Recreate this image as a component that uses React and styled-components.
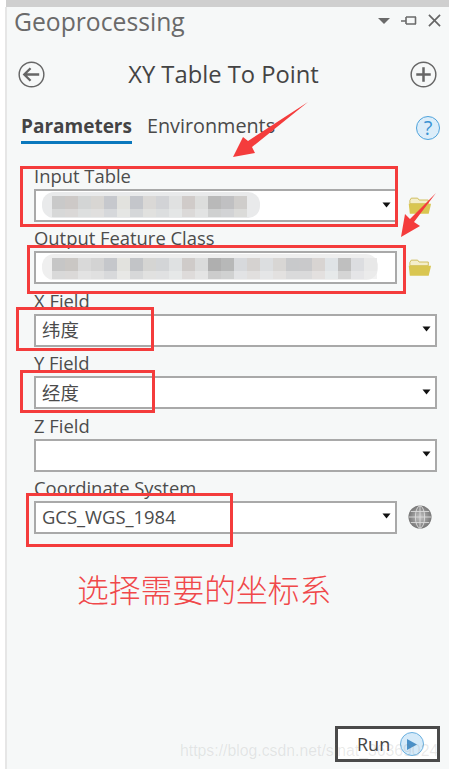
import React from 'react';
import styled, { createGlobalStyle } from 'styled-components';

const FONT = '"Open Sans", "Noto Sans CJK SC", sans-serif';

const BLOCKS_ONE = ['#c9c9c9', '#cdc9c7', '#d3d5d5', '#d8d6d3', '#c6c8cd', '#e2e2de', '#c4c6cb', '#dad8d6', '#d2d3d6', '#e0e1e1', '#d0cbc9', '#dcdddc', '#b9b9b9', '#c0c0c2', '#cfcdcb'];
const BLOCKS_TWO = ['#c6c6c6', '#cac7c4', '#d9d9d9', '#d3d3d3', '#c5c7cb', '#e2e2de', '#c2c4c7', '#d5d5d3', '#d3d5d7', '#dfe1e2', '#cfcbc9', '#dadbdb', '#afafaf', '#b7b8b8', '#d7d9dc', '#d5d2d0', '#dcdee0', '#d8d6d4', '#c8c9cb', '#c9c9cb', '#d8d4d2', '#dfe3e6', '#bfbfbf', '#dcdde0', '#e8e8e8'];

const Smudge = ({ blocks, width, pill }) => (
  <SmudgeSvg width={width} height="29" viewBox={`0 0 ${width} 29`}>
    <rect x="0" y="0" width={width} height="26" rx="12" fill={pill} />
    {blocks.map((c, i) => (
      <g key={i}>
        <rect x={10 + i * 13} y="4" width="13" height="13" fill={c} />
        <rect x={10 + i * 13} y="17" width="13" height="8" fill={c} opacity="0.55" />
      </g>
    ))}
  </SmudgeSvg>
);

const Caret = () => (
  <svg width="9" height="6" viewBox="0 0 9 6"><path d="M0.5 0.5h8L4.5 5.5z" fill="#111" /></svg>
);

const Folder = () => (
  <svg width="24" height="18" viewBox="0 0 26 19">
    <path d="M2 3.5 3.5 1h7L12 3h10v4H2z" fill="#f4eecb" stroke="#cdbb55" strokeWidth="1" />
    <path d="M2 18 .8 7H25l-2.6 11z" fill="#d9c651" />
  </svg>
);

const Globe = () => (
  <svg width="24" height="24" viewBox="0 0 26 26">
    <defs>
      <radialGradient id="globeFill">
        <stop offset="0" stopColor="#c4c4c4" />
        <stop offset="1" stopColor="#777" />
      </radialGradient>
    </defs>
    <circle cx="13" cy="13" r="12.5" fill="url(#globeFill)" />
    <g fill="none" stroke="#dadada" strokeWidth="1">
      <ellipse cx="13" cy="13" rx="5" ry="12" />
      <path d="M13 1v24M1 13h24M3 7h20M3 19h20" />
    </g>
  </svg>
);

const Field = ({ label, value, caret = true, wide, trailing, children }) => (
  <FieldRow>
    <Label>{label}</Label>
    <FieldLine>
      <Box $wide={wide}>
        <Value>{value}</Value>
        {children}
        {caret && <Caret />}
      </Box>
      {trailing && <Trailing>{trailing}</Trailing>}
    </FieldLine>
  </FieldRow>
);

const App = () => (
  <Page>
    <GlobalStyle />
    <TopBar />
    <Panel>
      <PaneHeader>
        <PaneTitle>Geoprocessing</PaneTitle>
        <PaneControls>
          <svg width="12" height="6" viewBox="0 0 12 6"><path d="M0 0h12L6 6z" fill="#6a6a6a" /></svg>
          <svg width="16" height="10" viewBox="0 0 16 10"><path d="M0 5h5M5 1h10M5 8h10M5 1v7M14.5 1v7" stroke="#6a6a6a" strokeWidth="1.6" fill="none" /></svg>
          <svg width="13" height="13" viewBox="0 0 14 14"><path d="M1 1l12 12M13 1L1 13" stroke="#666" strokeWidth="1.8" /></svg>
        </PaneControls>
      </PaneHeader>
      <ToolHeader>
        <svg width="27" height="27" viewBox="0 0 28 28">
          <circle cx="14" cy="14" r="12.8" fill="none" stroke="#666" strokeWidth="1.5" />
          <path d="M22 14H7M13 7.5 6.5 14l6.5 6.5" fill="none" stroke="#666" strokeWidth="2.4" />
        </svg>
        <ToolTitle>XY Table To Point</ToolTitle>
        <svg width="27" height="27" viewBox="0 0 28 28">
          <circle cx="14" cy="14" r="12.8" fill="none" stroke="#666" strokeWidth="1.5" />
          <path d="M14 6.5v15M6.5 14h15" fill="none" stroke="#666" strokeWidth="2.6" />
        </svg>
      </ToolHeader>
      <Tabs>
        <Tab $active>Parameters</Tab>
        <Tab>Environments</Tab>
        <HelpIcon>?</HelpIcon>
      </Tabs>
      <Fields>
        <Field label="Input Table" trailing={<Folder />}>
          <Smudge blocks={BLOCKS_ONE} width={218} pill="#e9eaeb" />
        </Field>
        <Field label="Output Feature Class" caret={false} trailing={<Folder />}>
          <Smudge blocks={BLOCKS_TWO} width={336} pill="#efefef" />
        </Field>
        <Field label="X Field" value="纬度" wide />
        <Field label="Y Field" value="经度" wide />
        <Field label="Z Field" wide />
        <Field label="Coordinate System" value="GCS_WGS_1984" trailing={<Globe />} />
      </Fields>
      <Note>选择需要的坐标系</Note>
      <Footer>
        <RunButton>
          Run
          <RunIcon>
            <svg width="10" height="11" viewBox="0 0 10 11"><path d="M0 0l10 5.5L0 11z" fill="#4a90c8" /></svg>
          </RunIcon>
        </RunButton>
      </Footer>
    </Panel>

    <Mark $left={20} $top={166} $w={378} $h={61} />
    <Mark $left={27} $top={245} $w={379} $h={49} />
    <Mark $left={16} $top={307} $w={138} $h={44} />
    <Mark $left={20} $top={370} $w={135} $h={43} />
    <Mark $left={26} $top={493} $w={207} $h={54} />
    <Arrows width="449" height="260" viewBox="0 0 449 260">
      <path d="M308 102 252 147 255 153 233 157 243 137 248 141z" fill="#f43c3c" />
      <path d="M436 193 414 222 420 226 401 237 405 214 410 219z" fill="#f43c3c" />
    </Arrows>
    <Watermark>https://blog.csdn.net/sinat_36369024</Watermark>
  </Page>
);

const GlobalStyle = createGlobalStyle`
  html, body { margin: 0; padding: 0; background: #fff; }
`;

const Page = styled.div`
  position: relative;
  width: 449px;
  height: 769px;
  overflow: hidden;
  padding-left: 5px;
  box-sizing: border-box;
  display: flex;
  flex-direction: column;
  font-family: ${FONT};
  background: #fff;
`;

const TopBar = styled.div`
  height: 7px;
  margin-left: 1px;
  background: #cfcfcf;
  flex: none;
`;

const Panel = styled.div`
  flex: 1;
  display: flex;
  flex-direction: column;
  background: #f6f8f8;
  border-left: 2px solid #e6e6e6;
  padding: 0 12px 7px 7px;
  min-height: 0;
`;

const PaneHeader = styled.div`
  display: flex;
  align-items: center;
  justify-content: space-between;
  height: 30px;
`;

const PaneTitle = styled.div`
  font-size: 24.7px;
  line-height: 30px;
  color: #6a6a6a;
`;

const PaneControls = styled.div`
  display: flex;
  align-items: center;
  gap: 11px;
  margin: -3px -4px 0 0;
`;

const ToolHeader = styled.div`
  display: flex;
  align-items: center;
  justify-content: space-between;
  height: 36px;
  margin-top: 19px;
  padding-left: 4px;
`;

const ToolTitle = styled.div`
  font-size: 23.75px;
  line-height: 36px;
  color: #444;
  margin-right: 8px;
`;

const Tabs = styled.div`
  display: flex;
  align-items: flex-start;
  gap: 15px;
  height: 34px;
  margin-top: 20px;
  padding-left: 7px;
  position: relative;
`;

const Tab = styled.div`
  font-size: ${p => (p.$active ? '19px' : '19.8px')};
  line-height: 28px;
  height: 32px;
  box-sizing: border-box;
  color: ${p => (p.$active ? '#444' : '#4a4a4a')};
  font-weight: ${p => (p.$active ? 700 : 400)};
  border-bottom: ${p => (p.$active ? '3px solid #0a78bd' : 'none')};
`;

const HelpIcon = styled.div`
  position: absolute;
  right: -3px;
  top: 4px;
  width: 24px;
  height: 24px;
  box-sizing: border-box;
  border: 1.5px solid #4fa3dc;
  border-radius: 50%;
  background: #dcedf9;
  color: #3a93d3;
  font-size: 20px;
  line-height: 21px;
  text-align: center;
`;

const Fields = styled.div`
  display: flex;
  flex-direction: column;
  margin-top: 19px;
  padding-left: 20px;
`;

const FieldRow = styled.div`
  height: 62.4px;
  flex: none;
`;

const Label = styled.div`
  font-size: 18.4px;
  line-height: 22px;
  height: 24px;
  color: #4c4c4c;
  white-space: nowrap;
`;

const FieldLine = styled.div`
  display: flex;
  align-items: center;
`;

const Box = styled.div`
  position: relative;
  box-sizing: border-box;
  width: ${p => (p.$wide ? '403px' : '363px')};
  height: 33px;
  flex: none;
  display: flex;
  align-items: center;
  justify-content: space-between;
  padding: 0 4px 2px 6px;
  background: #fff;
  border: 2px solid #a9a9a9;
`;

const Value = styled.span`
  font-size: 18.4px;
  color: #4b4b4b;
  white-space: nowrap;
`;

const Trailing = styled.div`
  display: flex;
  align-items: center;
  margin-left: 11px;
`;

const SmudgeSvg = styled.svg`
  position: absolute;
  left: 6px;
  top: 1px;
`;

const Note = styled.div`
  margin-top: 29px;
  padding-left: 63px;
  font-size: 31.8px;
  line-height: 44px;
  color: #f0484a;
  font-weight: 300;
  white-space: nowrap;
`;

const Footer = styled.div`
  margin-top: auto;
  display: flex;
  justify-content: flex-end;
  margin-right: -3px;
`;

const RunButton = styled.div`
  box-sizing: border-box;
  width: 105px;
  height: 36px;
  border: 3px solid #4a4a4a;
  background: #fff;
  display: flex;
  align-items: center;
  padding-left: 19px;
  gap: 10px;
  font-size: 18px;
  color: #444;
`;

const RunIcon = styled.div`
  width: 24px;
  height: 24px;
  box-sizing: border-box;
  border-radius: 50%;
  border: 1.5px solid #6ab0e0;
  background: #d5eaf9;
  display: flex;
  align-items: center;
  justify-content: center;
`;

const Mark = styled.div`
  position: absolute;
  left: ${p => p.$left}px;
  top: ${p => p.$top}px;
  width: ${p => p.$w}px;
  height: ${p => p.$h}px;
  box-sizing: border-box;
  border: 3px solid #f43c3c;
`;

const Arrows = styled.svg`
  position: absolute;
  left: 0;
  top: 0;
`;

const Watermark = styled.div`
  position: absolute;
  left: 180px;
  top: 742px;
  font-family: "Liberation Sans", sans-serif;
  font-size: 15.8px;
  line-height: 18px;
  color: rgba(120, 120, 120, 0.16);
  white-space: nowrap;
`;

export default App;
